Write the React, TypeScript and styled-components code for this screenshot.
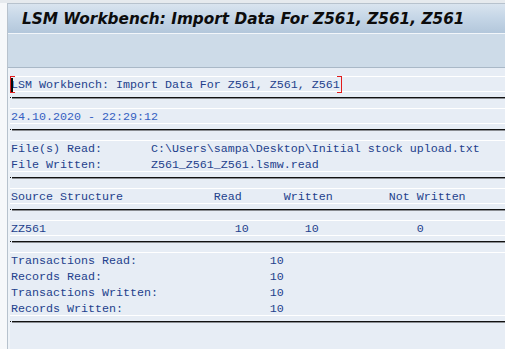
import { styled, createGlobalStyle } from "styled-components";

const GlobalStyle = createGlobalStyle`
  html, body {
    margin: 0;
    padding: 0;
    background: #f6f8fa;
  }
  #root {
    width: 505px;
    height: 349px;
    overflow: hidden;
  }
`;

const Page = styled.div`
  box-sizing: border-box;
  width: 505px;
  height: 349px;
  padding: 3px 0 0 7px;
  background: linear-gradient(to bottom, #e6eaee 0, #e6eaee 3px, #f6f8fa 3px);
`;

const Frame = styled.div`
  box-sizing: border-box;
  height: 100%;
  display: flex;
  flex-direction: column;
  border-left: 1px solid #b7c2cd;
  border-top: 1px solid #b7c2cd;
`;

const TitleBar = styled.div`
  box-sizing: border-box;
  height: 30px;
  padding: 1px 0 0 14px;
  display: flex;
  align-items: center;
  background: linear-gradient(to bottom, #d9e4ef 0%, #c4d5e6 50%, #b3c7db 100%);
  border-bottom: 1px solid #f2f6fa;
`;

const Title = styled.h1`
  margin: 0;
  font-family: "DejaVu Sans", Verdana, sans-serif;
  font-size: 15.3px;
  font-weight: bold;
  font-style: italic;
  color: #0c0c0c;
  white-space: nowrap;
`;

const Toolbar = styled.div`
  box-sizing: border-box;
  height: 34px;
  background: #cddbe8;
  border-bottom: 1px solid #a9b8c7;
`;

const Content = styled.div`
  flex: 1;
  padding: 8px 0 0 2px;
  background: #e7edf5;
  box-shadow: inset 2px 0 0 #eef3f8;
  font-family: "Liberation Mono", "Courier New", monospace;
  font-size: 11.67px;
  color: #233f8c;
`;

const Block = styled.div`
  display: flex;
  flex-direction: column;
  box-shadow: inset 0 1px 0 #ffffff, inset 0 -1px 0 #ffffff;
`;

const Line = styled.div<{ $strong?: boolean }>`
  box-sizing: border-box;
  height: 16px;
  padding: 2px 0 0 1px;
  display: flex;
  align-items: center;
  white-space: pre;
  color: ${({ $strong }) => ($strong ? "#3560c2" : "inherit")};
`;

const Cell = styled.span<{ $w?: number; $right?: boolean }>`
  flex: none;
  width: ${({ $w }) => ($w ? `${$w}ch` : "auto")};
  text-align: ${({ $right }) => ($right ? "right" : "left")};
`;

const Rule = styled.div`
  box-sizing: border-box;
  height: 16px;
  padding-top: 5px;

  &::before {
    content: "";
    display: block;
    height: 1px;
    background: linear-gradient(to right, #111 0, #111 1px, transparent 1px, transparent 2px, #111 2px);
  }
  &::after {
    content: "";
    display: block;
    height: 1px;
    background: linear-gradient(to right, transparent 0, transparent 2px, #8a8d92 2px);
  }
`;

const Focus = styled.span`
  position: relative;
  display: inline-block;

  &::before,
  &::after {
    content: "";
    position: absolute;
    top: -2px;
    bottom: -1px;
    width: 4px;
    border: 1.5px solid #e21b1b;
  }
  &::before {
    left: -1px;
    border-right: none;
  }
  &::after {
    right: -2px;
    border-left: none;
  }
`;

const Caret = styled.span`
  position: absolute;
  left: 0;
  top: 0;
  width: 2px;
  height: 14px;
  background: #0a0a0a;
`;

const headerTitle = "LSM Workbench: Import Data For Z561, Z561, Z561";

const totals = [
  { label: "Transactions Read:", value: "10" },
  { label: "Records Read:", value: "10" },
  { label: "Transactions Written:", value: "10" },
  { label: "Records Written:", value: "10" },
];

export default function App() {
  return (
    <>
      <GlobalStyle />
      <Page>
        <Frame>
          <TitleBar>
            <Title>{headerTitle}</Title>
          </TitleBar>
          <Toolbar />
          <Content>
            <Block>
              <Line>
                <Focus>
                  <Caret />
                  {headerTitle}
                </Focus>
              </Line>
            </Block>
            <Rule />
            <Block>
              <Line $strong>24.10.2020 - 22:29:12</Line>
            </Block>
            <Rule />
            <Block>
              <Line>
                <Cell $w={20}>File(s) Read:</Cell>
                <Cell>C:\Users\sampa\Desktop\Initial stock upload.txt</Cell>
              </Line>
              <Line>
                <Cell $w={20}>File Written:</Cell>
                <Cell>Z561_Z561_Z561.lsmw.read</Cell>
              </Line>
            </Block>
            <Rule />
            <Block>
              <Line>
                <Cell $w={29}>Source Structure</Cell>
                <Cell $w={4} $right>Read</Cell>
                <Cell $w={13} $right>Written</Cell>
                <Cell $w={19} $right>Not Written</Cell>
              </Line>
            </Block>
            <Rule />
            <Block>
              <Line>
                <Cell $w={32}>ZZ561</Cell>
                <Cell $w={2} $right>10</Cell>
                <Cell $w={10} $right>10</Cell>
                <Cell $w={15} $right>0</Cell>
              </Line>
            </Block>
            <Rule />
            <Block>
              {totals.map(({ label, value }) => (
                <Line key={label}>
                  <Cell $w={37}>{label}</Cell>
                  <Cell $w={2} $right>{value}</Cell>
                </Line>
              ))}
            </Block>
            <Rule />
          </Content>
        </Frame>
      </Page>
    </>
  );
}
